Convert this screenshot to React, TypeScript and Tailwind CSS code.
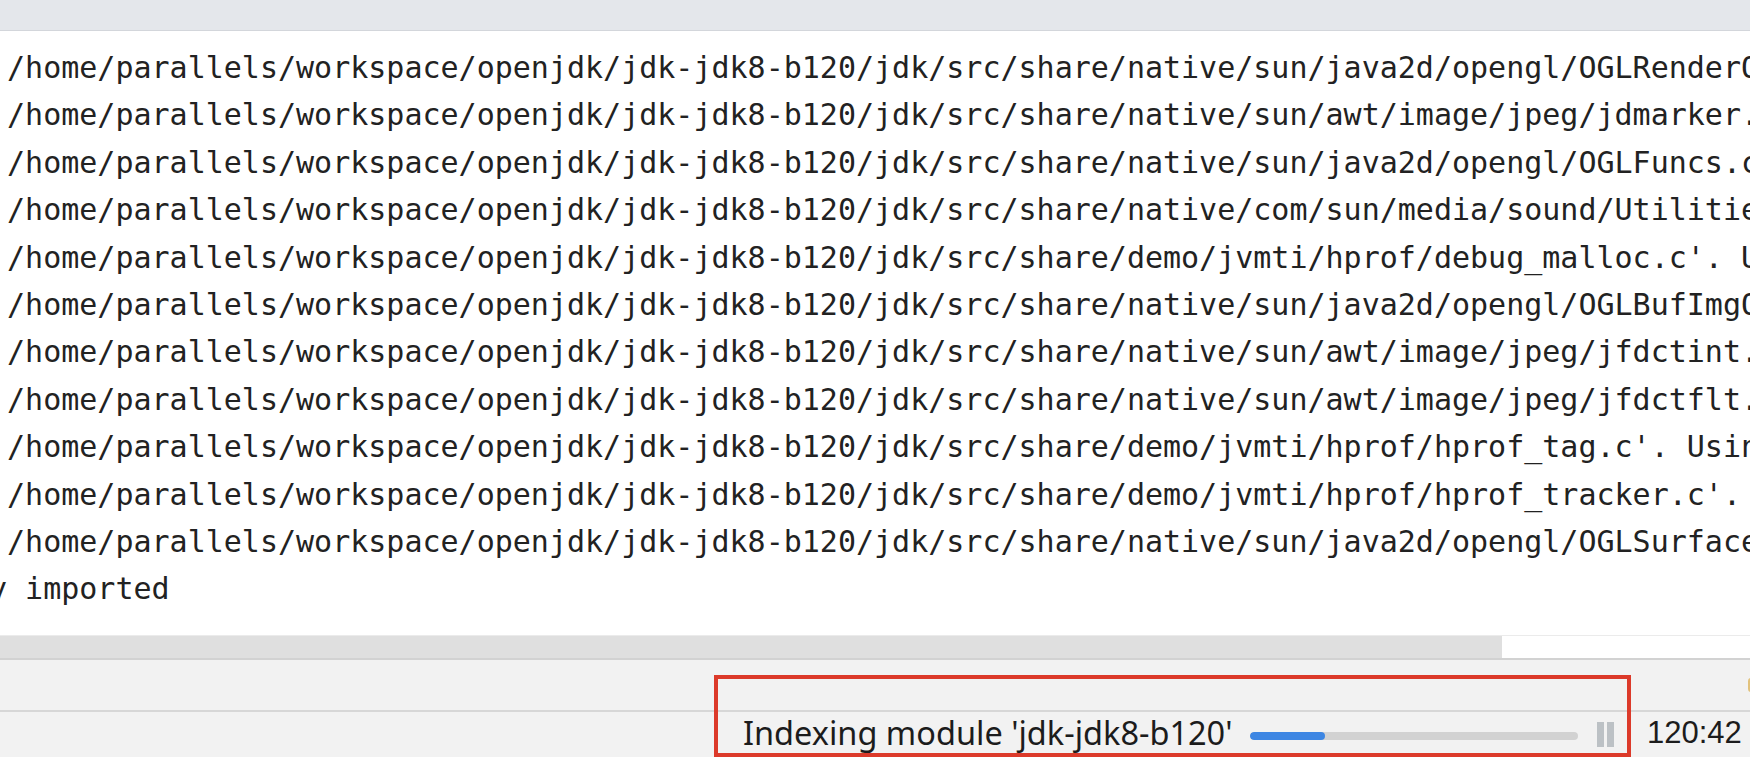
import React from "react";

const mono = { fontFamily: '"DejaVu Sans Mono", "Liberation Mono", monospace' };
const ui = { fontFamily: '"Noto Sans", "Open Sans", sans-serif' };

const base = "'/home/parallels/workspace/openjdk/jdk-jdk8-b120/jdk/src/share/";

const lines = [
    base + "native/sun/java2d/opengl/OGLRenderQueue.c'. Using",
    base + "native/sun/awt/image/jpeg/jdmarker.c'. Using",
    base + "native/sun/java2d/opengl/OGLFuncs.c'. Using",
    base + "native/com/sun/media/sound/Utilities.c'. Using",
    base + "demo/jvmti/hprof/debug_malloc.c'. Using",
    base + "native/sun/java2d/opengl/OGLBufImgOps.c'. Using",
    base + "native/sun/awt/image/jpeg/jfdctint.c'. Using",
    base + "native/sun/awt/image/jpeg/jfdctflt.c'. Using",
    base + "demo/jvmti/hprof/hprof_tag.c'. Using",
    base + "demo/jvmti/hprof/hprof_tracker.c'. Using",
    base + "native/sun/java2d/opengl/OGLSurfaceData.c'. Using",
    "y imported",
];

export default function App() {
    return (
        <div className="relative flex h-[772px] w-[1750px] flex-col overflow-hidden bg-white">
            {/* editor tab strip */}
            <div className="h-[31px] shrink-0 border-b border-[#d3d6db] bg-[#e4e7eb]" />

            {/* console output */}
            <div className="min-h-0 flex-1 overflow-hidden bg-white pt-[13px]">
                <div
                    className="-ml-[11px] whitespace-pre text-[30px] leading-[47.4px] text-[#222222]"
                    style={mono}
                >
                    {lines.map((line, i) => (
                        <div key={i}>{line}</div>
                    ))}
                </div>
            </div>

            {/* horizontal scrollbar */}
            <div className="flex h-[23px] shrink-0 border-t border-[#ebebeb] bg-white">
                <div className="h-full w-[1502px] bg-[#dfdfdf]" />
            </div>
            <div className="h-[2px] shrink-0 bg-[#d2d2d2]" />

            {/* tool window strip */}
            <div className="flex h-[50px] shrink-0 items-center justify-end bg-[#f2f2f2]">
                <div className="mr-[-4px] h-[14px] w-[6px] rounded-full border-2 border-[#e2c27c]" />
            </div>
            <div className="h-[2px] shrink-0 bg-[#d7d7d7]" />

            {/* status bar */}
            <div className="flex h-[45px] shrink-0 items-end bg-[#f2f2f2] pb-[4px] pl-[743px]">
                <div className="w-[507px] shrink-0">
                    <span
                        className="whitespace-nowrap text-[32.5px] leading-[40px] text-[#1c1c1c]"
                        style={ui}
                    >
                        Indexing module 'jdk-jdk8-b120'
                    </span>
                </div>
                <div className="mb-[13px] flex h-[8px] w-[328px] shrink-0 overflow-hidden rounded-full bg-[#d2d2d2]">
                    <div className="h-full w-[75px] rounded-full bg-[#3d86e3]" />
                </div>
                <div className="mb-[6px] ml-[19px] flex h-[25px] shrink-0 gap-[3px]">
                    <div className="h-full w-[7px] bg-[#bcc1c5]" />
                    <div className="h-full w-[7px] bg-[#bcc1c5]" />
                </div>
                <span
                    className="ml-[33px] whitespace-nowrap text-[31px] leading-[40px] text-[#1c1c1c]"
                    style={{ fontFamily: '"Liberation Sans", Arial, sans-serif' }}
                >
                    120:42
                </span>
            </div>
            <div className="h-[15px] shrink-0 bg-white" />

            {/* annotation frame */}
            <div className="absolute left-[714px] top-[675px] h-[82px] w-[917px] border-4 border-[#dc3a2a]" />
        </div>
    );
}
